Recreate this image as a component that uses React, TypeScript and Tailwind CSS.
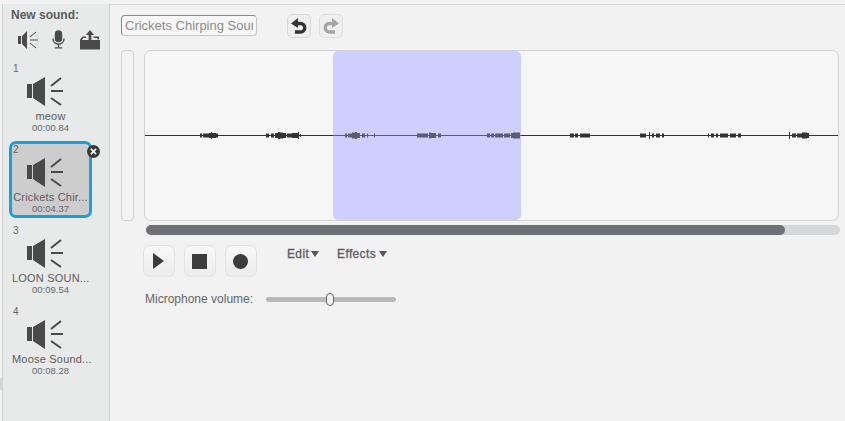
const sounds = [
  { id: 1, name: 'meow', time: '00:00.84' },
  { id: 2, name: 'Crickets Chir...', time: '00:04.37' },
  { id: 3, name: 'LOON SOUN...', time: '00:09.54' },
  { id: 4, name: 'Moose Sound...', time: '00:08.28' },
];

// x start, width, half height of each blob in the waveform, relative to the box
const blobs: [number, number, number][] = [
  [55, 2, 2], [58, 6, 2], [64, 2, 2.5], [66, 1, 3.5], [67, 4, 2.5], [71, 2, 2],
  [121, 3, 2], [126, 3, 2], [130, 3, 2.5], [133, 2, 3.5], [135, 3, 3], [138, 3, 2.5], [142, 5, 2], [147, 2, 2.5], [149, 4, 2.5], [153, 1, 3.5], [155, 1, 1.5],
  [200, 2, 2], [203, 4, 2], [207, 3, 3], [210, 2, 3.5], [212, 3, 2.5], [217, 3, 2], [222, 1, 2], [229, 1, 2],
  [272, 11, 2], [284, 2, 3], [286, 5, 2.5], [293, 3, 2],
  [342, 3, 2], [346, 3, 2], [350, 8, 2], [359, 6, 2], [366, 2, 2.5], [368, 4, 3], [372, 3, 3],
  [425, 4, 2], [430, 3, 2], [435, 7, 2], [442, 3, 2],
  [495, 6, 2], [504, 1, 3.5], [507, 2, 2], [511, 4, 2], [517, 2, 2],
  [563, 1, 2], [566, 3, 2], [571, 2, 2], [575, 8, 2], [585, 6, 2], [593, 3, 2],
  [644, 1, 3.5], [647, 4, 2], [652, 5, 2], [657, 5, 3], [662, 2, 2.5],
];

const SEL_START = 188;
const SEL_END = 376;

function SpeakerIcon({ className }: { className?: string }) {
  return (
    <svg viewBox="0 0 36 30" className={className}>
      <path d="M0 8h5v14H0z M6 8l12-7v29L6 22z" fill="#4a4a4a" />
      <path d="M24 10l10-8M24 15h12M24 22l10 7" stroke="#4a4a4a" strokeWidth="2" fill="none" />
    </svg>
  );
}

function SoundItem({ sound, selected }: { sound: (typeof sounds)[number]; selected: boolean }) {
  return (
    <div
      className={`relative w-[83px] h-[77px] rounded-[7px] border-[3px] ${
        selected ? 'border-[#1aa0d8] bg-[#cdcdcd]' : 'border-transparent'
      }`}
    >
      <div className="pl-[1px] text-[10px] leading-[12px] text-[#666]">{sound.id}</div>
      <SpeakerIcon className="ml-[15px] mt-[1px] w-[36px] h-[30px]" />
      <div className="mt-[4px] whitespace-nowrap text-center text-[11px] tracking-[0.2px] leading-[13px] text-[#5c5c5c]">{sound.name}</div>
      <div className="text-center text-[9.5px] leading-[12px] mt-[-1px] text-[#666]">{sound.time}</div>
      {selected && (
        <div className="absolute -right-[11px] top-[1px] w-[13px] h-[13px] rounded-full bg-[#3a3a3a] flex items-center justify-center">
          <svg viewBox="0 0 8 8" className="w-[7px] h-[7px]">
            <path d="M1 1l6 6M7 1l-6 6" stroke="#fff" strokeWidth="1.8" />
          </svg>
        </div>
      )}
    </div>
  );
}

function SquareButton({ children }: { children: React.ReactNode }) {
  return (
    <div className="w-[32px] h-[32px] pr-[1px] rounded-[7px] border border-[#e2e2e2] bg-gradient-to-b from-[#f8f8f8] to-[#ececec] flex items-center justify-center">
      {children}
    </div>
  );
}

function UndoIcon({ color, flip }: { color: string; flip?: boolean }) {
  return (
    <svg viewBox="0 0 16 16" className={`w-[16px] h-[16px] ${flip ? '-scale-x-100' : ''}`}>
      <path d="M7 0L0 5.5 7 10z" fill={color} />
      <path d="M6 5.5h3.5a4 4 0 0 1 0 8.5H4" stroke={color} strokeWidth="3.4" fill="none" />
    </svg>
  );
}

export default function App() {
  return (
    <div className="relative w-[845px] h-[421px] overflow-hidden flex bg-[#f2f2f2] pl-[2px] pt-[4px] font-['Liberation_Sans',Arial,sans-serif]">
      {/* Sound list */}
      <div className="w-[108px] shrink-0 bg-[#e8eaea] border-l border-r border-[#d0d0d0]">
        <div className="pl-[8px] pt-[4px] text-[12px] leading-[15px] font-bold text-[#5c5c5c]">New sound:</div>
        <div className="flex items-center pl-[15px] pt-[5px] h-[28px]">
          <svg viewBox="0 0 21 19" className="w-[21px] h-[19px]">
            <path d="M0 6h3v8H0z M4 6l5-5v18l-5-5z" fill="#4a4a4a" />
            <path d="M12 7l6-5M12 10h8M12 13l6 5" stroke="#4a4a4a" strokeWidth="1" fill="none" />
          </svg>
          <svg viewBox="0 0 14 20" className="ml-[13px] w-[13px] h-[19px]">
            <rect x="3" y="0" width="8" height="13" rx="4" fill="#4a4a4a" />
            <path d="M1 9c0 8 12 8 12 0M7 15v3M3 19h8" stroke="#4a4a4a" strokeWidth="1.5" fill="none" />
          </svg>
          <svg viewBox="0 0 20 20" className="ml-[15px] w-[20px] h-[20px]">
            <path d="M0 19.5V9.5l2.5-3h3.5v1.6H3.2l-1.4 1.9H20v9.5z" fill="#4a4a4a" />
            <path d="M13.5 6.5H19v3h-1.5V8h-4z" fill="#4a4a4a" />
            <path d="M10 0l4.2 5h-2.8v5H8.6V5H5.8z" fill="#4a4a4a" />
          </svg>
        </div>
        <div className="pl-[6px] pt-[9px] flex flex-col gap-[4px]">
          {sounds.map(s => (
            <SoundItem key={s.id} sound={s} selected={s.id === 2} />
          ))}
        </div>
      </div>

      {/* Editor */}
      <div className="flex-1 border-t border-[#d6d6d6] pl-[11px] pt-[8px]">
        <div className="flex items-center h-[25px]">
          <input
            readOnly
            value="Crickets Chirping Sound"
            className="w-[136px] h-[21px] rounded-[4px] border border-[#c4c4c4] border-t-[#8a8a8a] border-l-[#8a8a8a] bg-[#f7f7f7] px-[3px] text-[13px] text-[#8c8c8c] outline-none"
          />
          <div className="ml-[30px] w-[24px] h-[24px] rounded-[5px] border border-[#d8d8d8] bg-[#efefef] flex items-center justify-center">
            <UndoIcon color="#333" />
          </div>
          <div className="ml-[8px] w-[24px] h-[24px] rounded-[5px] border border-[#dedede] bg-[#efefef] flex items-center justify-center">
            <UndoIcon color="#a6a6a6" flip />
          </div>
        </div>

        <div className="flex mt-[12px]">
          <div className="w-[13px] h-[171px] rounded-[4px] border border-[#d2d2d2] bg-[#f4f4f4]" />
          <div className="relative ml-[10px] w-[695px] h-[171px] rounded-[7px] border border-[#d2d2d2] bg-[#f6f6f6] overflow-hidden">
            <div className="absolute left-[188px] top-0 w-[188px] h-full rounded-[5px] bg-[#cfcfff]" />
            <svg viewBox="0 0 695 171" className="relative w-[695px] h-[171px]">
              <rect x="0" y="84" width="695" height="1" fill="#333" />
              <rect x={SEL_START} y="84" width={SEL_END - SEL_START} height="1" fill="#5c5c70" />
              {blobs.map(([x, w, h], i) => (
                <rect
                  key={i}
                  x={x}
                  y={84.5 - h}
                  width={w}
                  height={h * 2}
                  fill={x >= SEL_START && x < SEL_END ? '#5c5c70' : '#333'}
                />
              ))}
            </svg>
          </div>
        </div>

        <div className="ml-[25px] mt-[4px] w-[694px] h-[10px] rounded-full bg-[#d6d7d8]">
          <div className="w-[639px] h-full rounded-full bg-[#6f7073]" />
        </div>

        <div className="flex mt-[10px] ml-[22px]">
          <div className="flex gap-[9px]">
            <SquareButton>
              <svg viewBox="0 0 11 16" className="w-[11px] h-[16px]"><path d="M0 0l11 8-11 8z" fill="#3c3c3c" /></svg>
            </SquareButton>
            <SquareButton>
              <div className="w-[15px] h-[15px] bg-[#3c3c3c]" />
            </SquareButton>
            <SquareButton>
              <div className="w-[15px] h-[15px] rounded-full bg-[#3c3c3c]" />
            </SquareButton>
          </div>
          <div className="flex ml-[30px] gap-[18px] pt-[2px] text-[12px] leading-[15px] tracking-[0.35px] text-[#5c5c5c] [-webkit-text-stroke:0.3px_#5c5c5c]">
            <div className="flex items-start">
              Edit
              <svg viewBox="0 0 8 6" className="ml-[2px] mt-[4px] w-[8px] h-[6px]"><path d="M0 0h8L4 6z" fill="#555" /></svg>
            </div>
            <div className="flex items-start">
              Effects
              <svg viewBox="0 0 8 6" className="ml-[3px] mt-[4px] w-[8px] h-[6px]"><path d="M0 0h8L4 6z" fill="#555" /></svg>
            </div>
          </div>
        </div>

        <div className="flex items-center ml-[24px] mt-[15px] h-[14px]">
          <span className="text-[12px] text-[#666] w-[121px]">Microphone volume:</span>
          <div className="relative w-[130px] h-[5px] rounded-full bg-[#b9b9b9]">
            <div className="absolute left-[60px] -top-[4px] w-[8px] h-[13px] rounded-full border border-[#666] bg-[#f2f2f2]" />
          </div>
        </div>
      </div>

      {/* small tab peeking in at the left edge */}
      <div className="absolute left-0 top-[378px] w-[2px] h-[12px] bg-[#d8d8d8]" />
    </div>
  );
}
